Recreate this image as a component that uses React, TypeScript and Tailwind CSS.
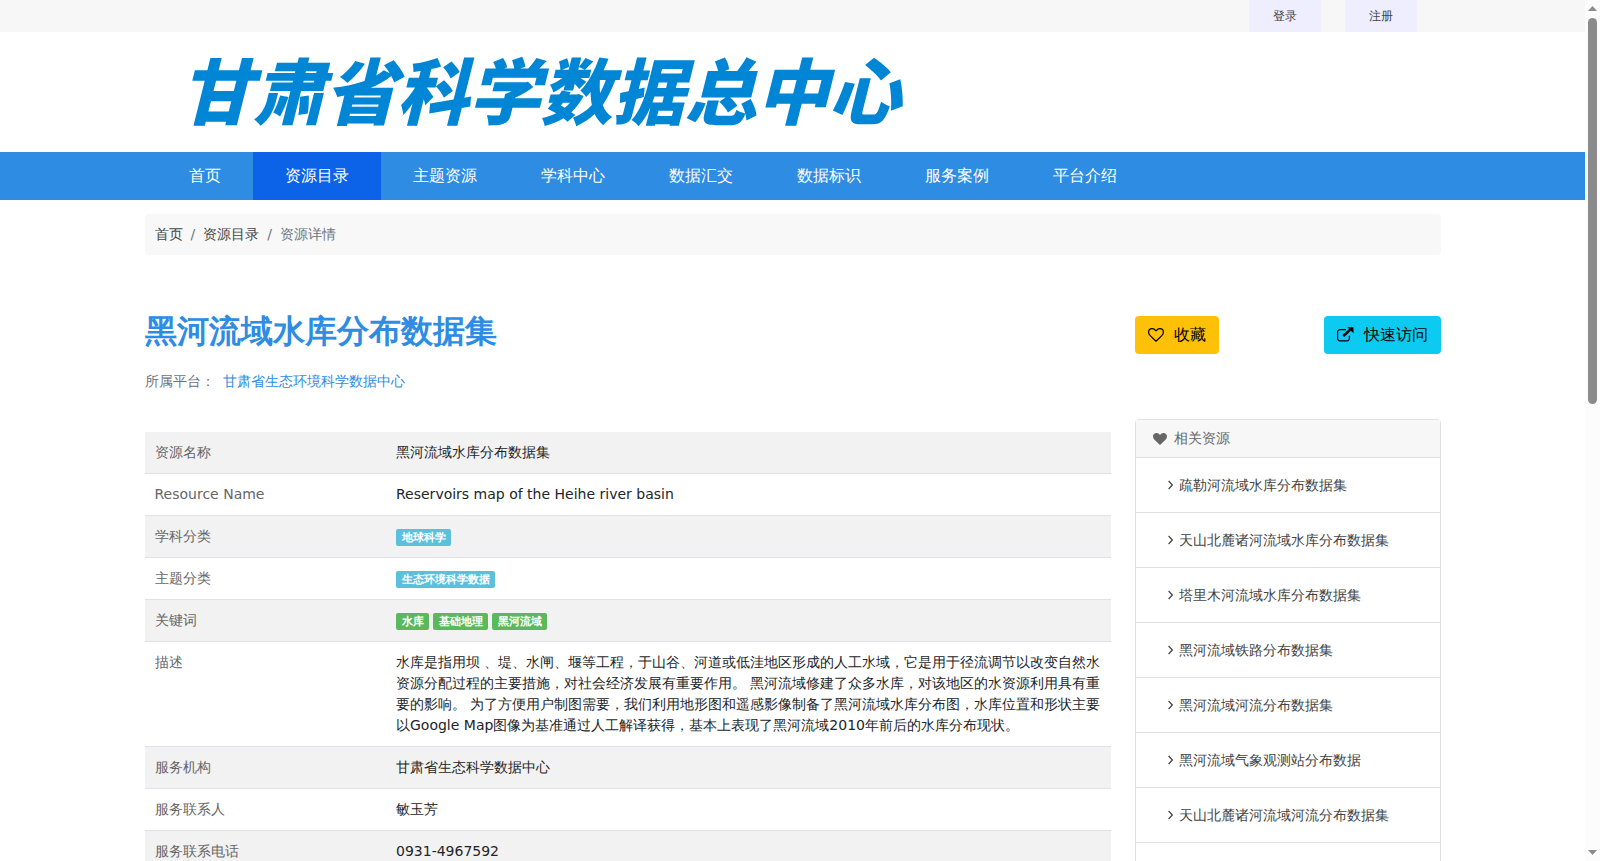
const navItems = ["首页", "资源目录", "主题资源", "学科中心", "数据汇交", "数据标识", "服务案例", "平台介绍"];

const related = [
  "疏勒河流域水库分布数据集",
  "天山北麓诸河流域水库分布数据集",
  "塔里木河流域水库分布数据集",
  "黑河流域铁路分布数据集",
  "黑河流域河流分布数据集",
  "黑河流域气象观测站分布数据",
  "天山北麓诸河流域河流分布数据集",
];

type Row = { label: string; text?: string; tags?: string[]; green?: boolean };

const rows: Row[] = [
  { label: "资源名称", text: "黑河流域水库分布数据集" },
  { label: "Resource Name", text: "Reservoirs map of the Heihe river basin" },
  { label: "学科分类", tags: ["地球科学"] },
  { label: "主题分类", tags: ["生态环境科学数据"] },
  { label: "关键词", tags: ["水库", "基础地理", "黑河流域"], green: true },
  {
    label: "描述",
    text: "水库是指用坝 、堤、水闸、堰等工程，于山谷、河道或低洼地区形成的人工水域，它是用于径流调节以改变自然水资源分配过程的主要措施，对社会经济发展有重要作用。 黑河流域修建了众多水库，对该地区的水资源利用具有重要的影响。 为了方便用户制图需要，我们利用地形图和遥感影像制备了黑河流域水库分布图，水库位置和形状主要以Google Map图像为基准通过人工解译获得，基本上表现了黑河流域2010年前后的水库分布现状。",
  },
  { label: "服务机构", text: "甘肃省生态科学数据中心" },
  { label: "服务联系人", text: "敏玉芳" },
  { label: "服务联系电话", text: "0931-4967592" },
];

function HeartOutline() {
  return (
    <svg className="w-4 h-4" viewBox="0 0 16 16" fill="none" stroke="currentColor" strokeWidth="1.2" strokeLinejoin="round">
      <path d="M8 14.2 2.2 8.6C1.2 7.6.6 6.5.6 5.2.6 3 2 1.7 4.2 1.7 5.8 1.7 7 2.7 8 3.9 9 2.7 10.2 1.7 11.8 1.7 14 1.7 15.4 3 15.4 5.2 15.4 6.5 14.8 7.6 13.8 8.6Z" />
    </svg>
  );
}

function ExternalLink() {
  return (
    <svg className="w-[17px] h-4" viewBox="0 0 17 16" fill="none" stroke="currentColor">
      <path d="M9 2.6H3A2.4 2.4 0 0 0 .6 5V11.5A2.4 2.4 0 0 0 3 13.9H10A2.4 2.4 0 0 0 12.4 11.5V8.8" strokeWidth="1.2" />
      <path d="M6.3 9 14 1.800" strokeWidth="2.4" />
      <path d="M10.4.2H16.5V6.3Z" fill="currentColor" stroke="none" />
    </svg>
  );
}

function HeartSolid() {
  return (
    <svg className="w-[14px] h-[14px]" viewBox="0 0 14 14" fill="currentColor">
      <path d="M7 13 1.5 7.7C.5 6.7 0 5.6 0 4.4 0 2.3 1.4 1 3.7 1 5 1 6.2 1.9 7 2.9 7.8 1.9 9 1 10.3 1 12.6 1 14 2.3 14 4.4 14 5.6 13.5 6.7 12.5 7.7Z" />
    </svg>
  );
}

function AngleRight() {
  return (
    <svg className="w-[5px] h-[14px] shrink-0" viewBox="0 0 5 14" fill="none" stroke="currentColor" strokeWidth="1.2">
      <path d="M.6 3 4.3 7 .6 11" />
    </svg>
  );
}

function Header() {
  return (
    <header>
      <div className="bg-[#f7f7f7]">
        <div className="max-w-[1320px] mx-auto px-9 flex justify-end gap-6 text-xs leading-8 text-[#444]">
          <a href="#login" className="px-6 bg-[#efeeff]">登录</a>
          <a href="#register" className="px-6 bg-[#efeeff]">注册</a>
        </div>
      </div>
      <div className="max-w-[1320px] h-[120px] mx-auto px-12 pb-2 flex items-center">
        <a href="#home" className="text-7xl italic font-black whitespace-nowrap text-[#0086d4] font-['Noto_Sans_CJK_SC',sans-serif]">
          甘肃省科学数据总中心
        </a>
      </div>
      <nav className="bg-[#2e8ce3]">
        <ul className="max-w-[1320px] mx-auto px-6 flex text-base leading-[48px] text-white">
          {navItems.map((item) => (
            <li key={item}>
              <a href="#nav" className={item === "资源目录" ? "block px-8 bg-[#0c63e7]" : "block px-8"}>
                {item}
              </a>
            </li>
          ))}
        </ul>
      </nav>
    </header>
  );
}

function InfoTable() {
  return (
    <table className="w-full table-fixed border-collapse">
      <tbody>
        {rows.map((row) => (
          <tr key={row.label} className="align-top border-b border-[#dee2e6] odd:bg-[#f2f2f2]">
            <th scope="row" className="w-1/4 p-[10px] text-left font-normal text-[#666]">
              {row.label}
            </th>
            <td className="p-[10px]">
              {row.text}
              {row.tags && (
                <div className="flex h-[21px] items-center gap-1 pt-px">
                  {row.tags.map((tag) => (
                    <span
                      key={tag}
                      className={
                        row.green
                          ? "pl-[6px] pr-[5px] rounded-xs text-[11px] leading-[17px] font-bold text-white bg-[#5cb85c]"
                          : "pl-[6px] pr-[5px] rounded-xs text-[11px] leading-[17px] font-bold text-white bg-[#5bc0de]"
                      }
                    >
                      {tag}
                    </span>
                  ))}
                </div>
              )}
            </td>
          </tr>
        ))}
      </tbody>
    </table>
  );
}

function Related() {
  return (
    <aside className="h-full border border-[#dfdfdf] rounded-sm">
      <h2 className="flex items-center gap-[7px] px-[17px] py-2 border-b border-[#dfdfdf] bg-[#f7f7f7] text-[#666]">
        <HeartSolid />
        相关资源
      </h2>
      <ul className="text-[#444]">
        {related.map((name) => (
          <li key={name} className="border-b border-[#dfdfdf]">
            <a href="#related" className="flex items-center gap-[6px] pl-8 leading-[54px]">
              <AngleRight />
              {name}
            </a>
          </li>
        ))}
      </ul>
    </aside>
  );
}

function Scrollbar() {
  return (
    <div className="w-[15px] shrink-0 flex flex-col items-center bg-[#fcfcfc] py-[6px] text-[#8b8b8b]">
      <svg className="w-[9px] h-[5px] shrink-0" viewBox="0 0 9 5" fill="currentColor">
        <path d="M0 5 4.5 0 9 5Z" />
      </svg>
      <div className="mt-[7px] w-[9px] h-5/11 rounded-full bg-[#8b8b8b]" />
      <svg className="mt-auto w-[9px] h-[5px] shrink-0" viewBox="0 0 9 5" fill="currentColor">
        <path d="M0 0 4.5 5 9 0Z" />
      </svg>
    </div>
  );
}

export default function App() {
  return (
    <div className="flex h-screen overflow-hidden bg-white text-sm leading-[21px] text-[#212529] font-['DejaVu_Sans',sans-serif]">
      <div className="flex-1 min-w-0 overflow-hidden">
        <Header />
        <main className="max-w-[1320px] mx-auto px-3">
          <nav className="mt-[14px] px-[10px] py-[10px] rounded-sm bg-[#f8f8f8] text-[#6c757d]">
            <ol className="flex gap-2">
              <li><a href="#home" className="text-[#444]">首页</a></li>
              <li>/</li>
              <li><a href="#catalog" className="text-[#444]">资源目录</a></li>
              <li>/</li>
              <li>资源详情</li>
            </ol>
          </nav>

          <div className="flex gap-6 mt-[57px]">
            <div className="flex-1 min-w-0">
              <h1 className="text-[32px] leading-[38px] font-semibold text-[#2e8ce3]">黑河流域水库分布数据集</h1>
              <p className="mt-[21px] flex gap-2 text-[#6c757d]">
                所属平台：
                <a href="#platform" className="text-[#2e8ce3]">甘肃省生态环境科学数据中心</a>
              </p>
            </div>
            <div className="w-[306px] flex justify-between items-start pt-1 text-base leading-[38px] text-black">
              <button type="button" className="flex items-center gap-[10px] px-[13px] rounded-sm bg-[#ffc107]">
                <HeartOutline />
                收藏
              </button>
              <button type="button" className="flex items-center gap-[10px] px-[13px] rounded-sm bg-[#0dcaf0]">
                <ExternalLink />
                快速访问
              </button>
            </div>
          </div>

          <div className="flex gap-6 mt-[27px]">
            <div className="flex-1 min-w-0 pt-[13px]">
              <InfoTable />
            </div>
            <div className="w-[306px]">
              <Related />
            </div>
          </div>
        </main>
      </div>
      <Scrollbar />
    </div>
  );
}
